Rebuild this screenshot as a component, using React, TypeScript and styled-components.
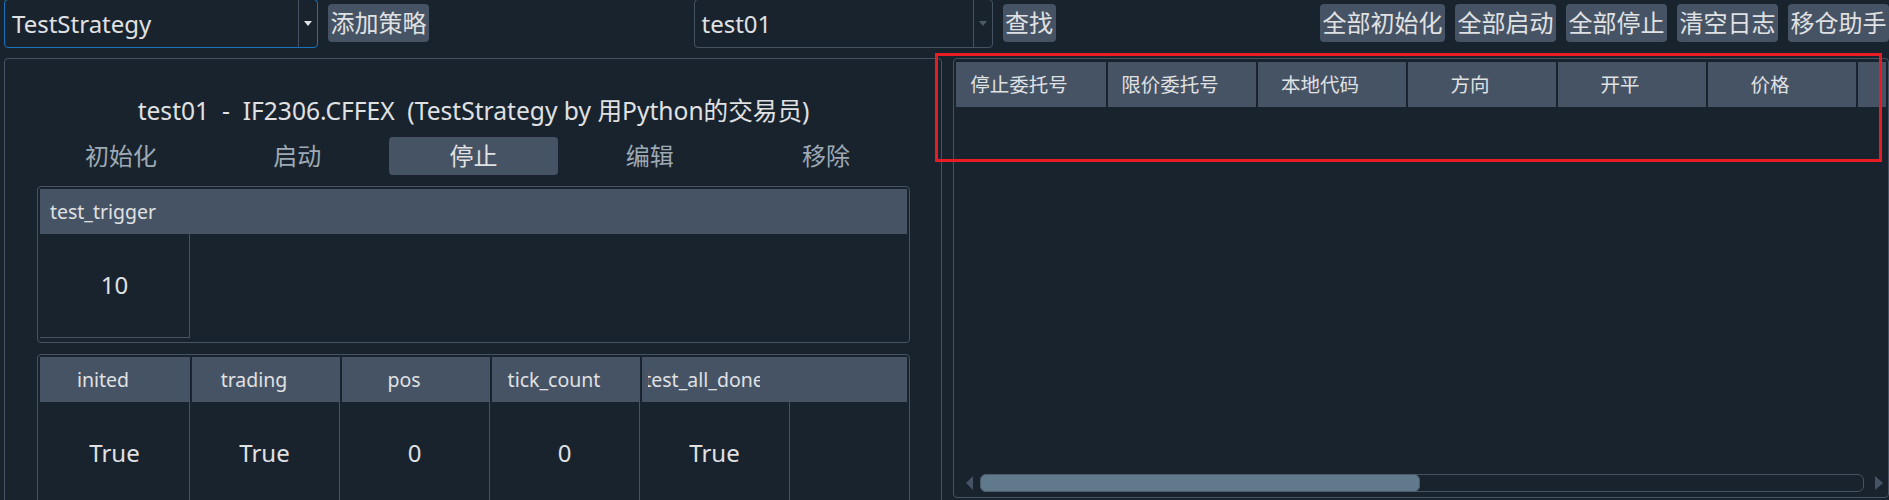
import React from "react";
import styled, { createGlobalStyle } from "styled-components";

const GlobalStyle = createGlobalStyle`
  html, body {
    margin: 0;
    padding: 0;
    background: #19232d;
  }
  body {
    font-family: "Noto Sans", "Noto Sans CJK SC", sans-serif;
    color: #e0e1e3;
  }
`;

const Page = styled.div`
  position: relative;
  width: 1889px;
  height: 500px;
  overflow: hidden;
  background: #19232d;
`;

const TopBar = styled.div`
  display: flex;
  align-items: flex-start;
  gap: 10px;
  height: 48px;
  padding-left: 4px;
`;

const Combo = styled.div<{ $focused?: boolean; $width: number }>`
  flex-shrink: 0;
  box-sizing: border-box;
  width: ${(p) => p.$width}px;
  height: 49px;
  margin-top: -1px;
  border: 1px solid ${(p) => (p.$focused ? "#1a72bb" : "#455364")};
  border-radius: 4px;
  display: flex;
  align-items: stretch;
`;

const ComboText = styled.div`
  flex: 1;
  display: flex;
  align-items: center;
  padding-left: 7px;
  padding-top: 1px;
  font-size: 24px;
  line-height: 1;
  white-space: nowrap;
`;

const ComboArrowBox = styled.div`
  width: 18px;
  border-left: 1px solid #455364;
  display: flex;
  align-items: center;
  justify-content: center;
`;

const DownTriangle = styled.span<{ $dim?: boolean }>`
  width: 0;
  height: 0;
  border-left: 4.5px solid transparent;
  border-right: 4.5px solid transparent;
  border-top: 5px solid ${(p) => (p.$dim ? "#4d5a68" : "#e0e1e3")};
  margin-top: -1px;
`;

const ToolButton = styled.button`
  flex-shrink: 0;
  height: 38px;
  margin-top: 4px;
  padding: 0 2.5px;
  border: none;
  border-radius: 4px;
  background: #455364;
  color: #e0e1e3;
  font-family: inherit;
  font-size: 24px;
  line-height: 38px;
  white-space: nowrap;
`;

const Spacer = styled.div`
  flex: 1;
`;

const Main = styled.div`
  display: flex;
  align-items: flex-start;
  gap: 11px;
  margin-top: 10px;
  padding-left: 4px;
`;

const LeftPanel = styled.div`
  flex-shrink: 0;
  box-sizing: border-box;
  width: 938px;
  height: 470px;
  border: 1px solid #455364;
  border-radius: 4px;
  padding: 35px 31px 0 32px;
  display: flex;
  flex-direction: column;
`;

const Title = styled.div`
  height: 34px;
  line-height: 34px;
  text-align: center;
  font-size: 24.6px;
  white-space: pre;
`;

const ActionRow = styled.div`
  margin-top: 9px;
  display: grid;
  grid-template-columns: repeat(5, 1fr);
  column-gap: 8px;
`;

const ActionButton = styled.button<{ $active?: boolean }>`
  height: 38px;
  border: none;
  border-radius: 4px;
  background: ${(p) => (p.$active ? "#455364" : "transparent")};
  color: ${(p) => (p.$active ? "#e0e1e3" : "#9da9b5")};
  font-family: inherit;
  font-size: 24px;
  line-height: 38px;
  padding: 0;
`;

const DataBox = styled.div<{ $height?: number }>`
  box-sizing: border-box;
  margin-top: 11px;
  ${(p) => (p.$height ? `height: ${p.$height}px;` : "")}
  border: 1px solid #455364;
  border-radius: 4px;
  padding: 2px;
  overflow: hidden;
`;

const HeaderRow = styled.div`
  display: flex;
  height: 45px;
  background: #455364;
  overflow: hidden;
`;

const HeaderCell = styled.div`
  flex-shrink: 0;
  box-sizing: border-box;
  width: 150px;
  padding: 0 30px 0 6px;
  display: flex;
  & + & {
    border-left: 2px solid #19232d;
  }
`;

const HeaderLabel = styled.div`
  flex: 1;
  min-width: 0;
  overflow: hidden;
  display: flex;
  align-items: center;
  justify-content: center;
  white-space: nowrap;
  font-size: 19.5px;
  line-height: 1;
  color: #e0e1e3;
`;

const BodyRow = styled.div`
  display: flex;
  height: 104px;
`;

const BodyCell = styled.div`
  flex-shrink: 0;
  box-sizing: border-box;
  width: 150px;
  border-right: 1px solid #455364;
  border-bottom: 1px solid #455364;
  display: flex;
  align-items: center;
  justify-content: center;
  font-size: 24px;
  line-height: 1;
  padding-bottom: 2px;
`;

const RightFrame = styled.div`
  flex-shrink: 0;
  box-sizing: border-box;
  width: 936px;
  height: 440px;
  border: 1px solid #455364;
  border-radius: 4px;
  padding: 3px 2px 5px 2px;
  display: flex;
  flex-direction: column;
  overflow: hidden;
`;

const TableBody = styled.div`
  flex: 1;
`;

const ScrollRow = styled.div`
  display: flex;
  align-items: center;
  height: 18px;
  margin: 0 3px 0 10px;
`;

const ArrowLeft = styled.span`
  width: 0;
  height: 0;
  border-top: 7.5px solid transparent;
  border-bottom: 7.5px solid transparent;
  border-right: 7px solid #455364;
  margin-right: 7px;
`;

const ArrowRight = styled.span`
  width: 0;
  height: 0;
  border-top: 7.5px solid transparent;
  border-bottom: 7.5px solid transparent;
  border-left: 8px solid #455364;
  margin-left: 11px;
`;

const Track = styled.div`
  flex: 1;
  box-sizing: border-box;
  height: 18px;
  border: 1px solid #455364;
  border-radius: 6px;
  display: flex;
`;

const Thumb = styled.div<{ $width: number }>`
  box-sizing: border-box;
  width: ${(p) => p.$width}px;
  margin: -1px 0 -1px -1px;
  background: #60798b;
  border: 1px solid #4b5c6c;
  border-radius: 6px;
`;

const Highlight = styled.div`
  position: absolute;
  left: 935px;
  top: 53px;
  width: 947px;
  height: 109px;
  box-sizing: border-box;
  border: 3px solid #e81c24;
  pointer-events: none;
`;

const params = [{ name: "test_trigger", value: "10" }];
const variables = [
  { name: "inited", value: "True" },
  { name: "trading", value: "True" },
  { name: "pos", value: "0" },
  { name: "tick_count", value: "0" },
  { name: "test_all_done", value: "True" },
];
const orderHeaders = ["停止委托号", "限价委托号", "本地代码", "方向", "开平", "价格", "数量", "状态"];
const actions = [
  { label: "初始化" },
  { label: "启动" },
  { label: "停止", active: true },
  { label: "编辑" },
  { label: "移除" },
];

export default function App() {
  return (
    <Page>
      <GlobalStyle />
      <TopBar>
        <Combo $focused $width={314}>
          <ComboText>TestStrategy</ComboText>
          <ComboArrowBox>
            <DownTriangle />
          </ComboArrowBox>
        </Combo>
        <ToolButton>添加策略</ToolButton>
        <Spacer />
        <Combo $width={299}>
          <ComboText>test01</ComboText>
          <ComboArrowBox>
            <DownTriangle $dim />
          </ComboArrowBox>
        </Combo>
        <ToolButton>查找</ToolButton>
        <Spacer />
        <ToolButton>全部初始化</ToolButton>
        <ToolButton>全部启动</ToolButton>
        <ToolButton>全部停止</ToolButton>
        <ToolButton>清空日志</ToolButton>
        <ToolButton>移仓助手</ToolButton>
      </TopBar>
      <Main>
        <LeftPanel>
          <Title>{"test01  -  IF2306.CFFEX  (TestStrategy by 用Python的交易员)"}</Title>
          <ActionRow>
            {actions.map((a) => (
              <ActionButton key={a.label} $active={a.active}>
                {a.label}
              </ActionButton>
            ))}
          </ActionRow>
          <DataBox $height={157}>
            <HeaderRow>
              {params.map((p) => (
                <HeaderCell key={p.name}>
                  <HeaderLabel>{p.name}</HeaderLabel>
                </HeaderCell>
              ))}
            </HeaderRow>
            <BodyRow>
              {params.map((p) => (
                <BodyCell key={p.name}>{p.value}</BodyCell>
              ))}
            </BodyRow>
          </DataBox>
          <DataBox>
            <HeaderRow>
              {variables.map((v) => (
                <HeaderCell key={v.name}>
                  <HeaderLabel>{v.name}</HeaderLabel>
                </HeaderCell>
              ))}
            </HeaderRow>
            <BodyRow>
              {variables.map((v) => (
                <BodyCell key={v.name}>{v.value}</BodyCell>
              ))}
            </BodyRow>
          </DataBox>
        </LeftPanel>
        <RightFrame>
          <HeaderRow>
            {orderHeaders.map((h) => (
              <HeaderCell key={h}>
                <HeaderLabel>{h}</HeaderLabel>
              </HeaderCell>
            ))}
          </HeaderRow>
          <TableBody />
          <ScrollRow>
            <ArrowLeft />
            <Track>
              <Thumb $width={440} />
            </Track>
            <ArrowRight />
          </ScrollRow>
        </RightFrame>
      </Main>
      <Highlight />
    </Page>
  );
}
